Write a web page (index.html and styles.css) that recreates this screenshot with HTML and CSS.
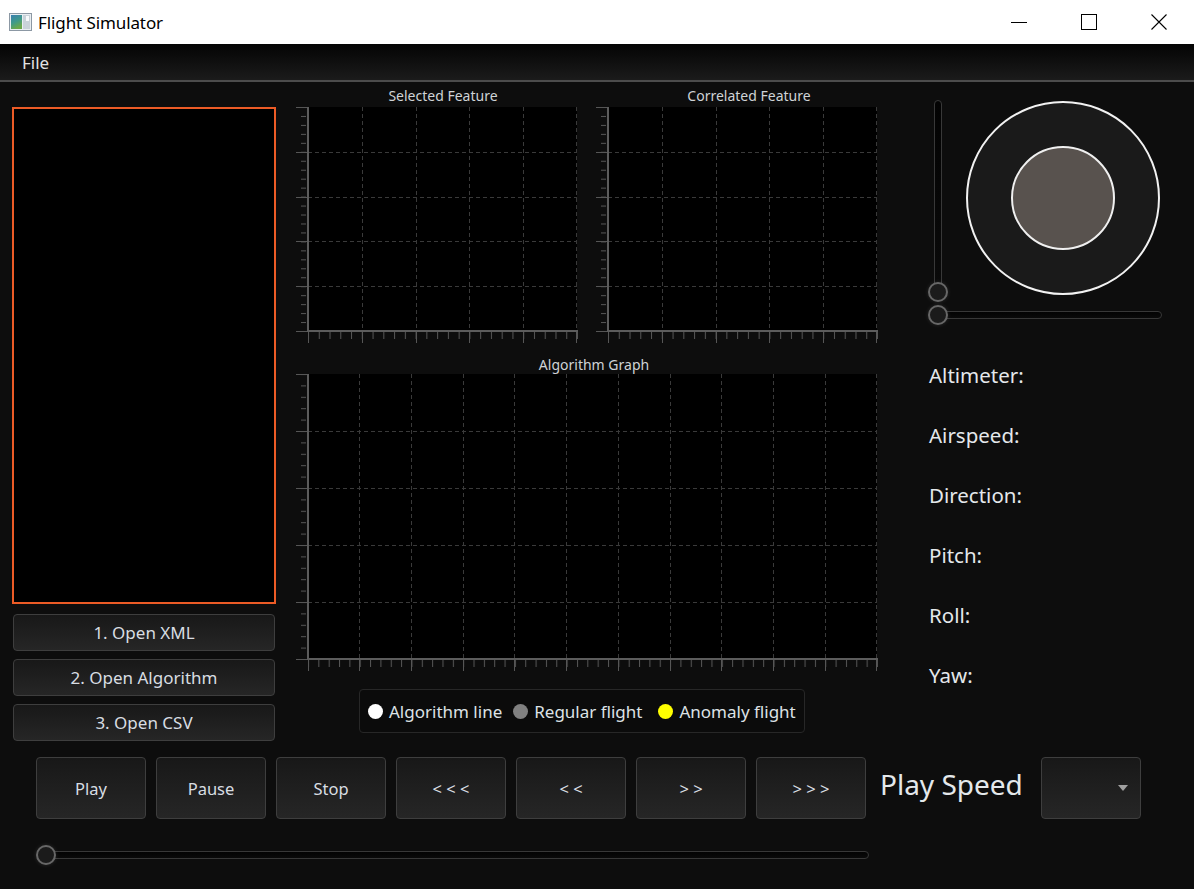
FILE: index.html
```html
<!DOCTYPE html>
<html lang="en">
<head>
<meta charset="utf-8">
<title>Flight Simulator</title>
<link rel="stylesheet" href="styles.css">
</head>
<body>
<div class="window">
  <header class="titlebar">
    <svg class="app-icon" width="23" height="18" viewBox="0 0 23 18">
      <defs>
        <linearGradient id="icoGrad" x1="0" y1="0" x2="0.4" y2="1">
          <stop offset="0" stop-color="#3a7fb0"/>
          <stop offset="0.55" stop-color="#3f9a8a"/>
          <stop offset="1" stop-color="#6aa84a"/>
        </linearGradient>
      </defs>
      <rect x="0.5" y="0.5" width="22" height="17" fill="#e9eef2" stroke="#8c98a4"/>
      <rect x="2" y="2" width="11" height="14" fill="url(#icoGrad)"/>
      <rect x="14" y="2" width="7" height="14" fill="#c9d2d9"/>
      <rect x="17" y="3" width="3" height="5" fill="#f7f9fb"/>
    </svg>
    <span class="title-text">Flight Simulator</span>
    <div class="win-controls">
      <span class="wc"><svg width="16" height="16" viewBox="0 0 16 16"><path d="M0 8.5H16" stroke="#000" stroke-width="1"/></svg></span>
      <span class="wc"><svg width="16" height="16" viewBox="0 0 16 16"><rect x="0.5" y="0.5" width="15" height="15" fill="none" stroke="#000" stroke-width="1"/></svg></span>
      <span class="wc"><svg width="16" height="16" viewBox="0 0 16 16"><path d="M0.5 0.5L15.5 15.5M15.5 0.5L0.5 15.5" stroke="#000" stroke-width="1.1"/></svg></span>
    </div>
  </header>

  <nav class="menubar"><span class="menu-item">File</span></nav>

  <main class="content">
    <div class="top">
      <section class="left-col">
        <div class="preview"></div>
        <button class="btn side-btn">1. Open XML</button>
        <button class="btn side-btn">2. Open Algorithm</button>
        <button class="btn side-btn">3. Open CSV</button>
      </section>

      <section class="center-col">
        <div class="chart-row">
          <div class="chart">
            <div class="chart-title">Selected Feature</div>
            <svg class="plot" width="286" height="240" viewBox="0 0 286 240">
              <defs>
                <pattern id="ymA" x="0" y="0" width="12" height="8.96" patternUnits="userSpaceOnUse"><rect x="7" y="0" width="5" height="1" fill="#565656"/></pattern>
                <pattern id="xmA" x="14" y="224" width="10.76" height="8" patternUnits="userSpaceOnUse"><rect x="0" y="0" width="1" height="8" fill="#565656"/></pattern>
              </defs>
              <rect x="14" y="0" width="269" height="224" fill="#000"/>
              <g stroke="#3a3a3a" stroke-width="1" stroke-dasharray="4 3" fill="none">
                <path d="M14 45.5H283M14 90.5H283M14 134.5H283M14 179.5H283"/>
                <path d="M68.5 0V224M122.5 0V224M175.5 0V224M229.5 0V224M282.5 0V224"/>
              </g>
              <rect x="2" y="0" width="12" height="224" fill="url(#ymA)"/>
              <rect x="14" y="224" width="270" height="8" fill="url(#xmA)"/>
              <g stroke="#565656" stroke-width="1" fill="none">
                <path d="M2 0.5H14M2 45.5H14M2 90.5H14M2 134.5H14M2 179.5H14M2 224.5H14"/>
                <path d="M14.5 224V236M68.5 224V236M122.5 224V236M175.5 224V236M229.5 224V236M282.5 224V236"/>
              </g>
              <rect x="13" y="0" width="2" height="225" fill="#5c5c5c"/>
              <rect x="13" y="223" width="271" height="2" fill="#5c5c5c"/>
            </svg>
          </div>
          <div class="chart">
            <div class="chart-title shifted">Correlated Feature</div>
            <svg class="plot" width="286" height="240" viewBox="0 0 286 240">
              <defs>
                <pattern id="ymB" x="0" y="0" width="12" height="8.96" patternUnits="userSpaceOnUse"><rect x="7" y="0" width="5" height="1" fill="#565656"/></pattern>
                <pattern id="xmB" x="14" y="224" width="10.76" height="8" patternUnits="userSpaceOnUse"><rect x="0" y="0" width="1" height="8" fill="#565656"/></pattern>
              </defs>
              <rect x="14" y="0" width="269" height="224" fill="#000"/>
              <g stroke="#3a3a3a" stroke-width="1" stroke-dasharray="4 3" fill="none">
                <path d="M14 45.5H283M14 90.5H283M14 134.5H283M14 179.5H283"/>
                <path d="M68.5 0V224M122.5 0V224M175.5 0V224M229.5 0V224M282.5 0V224"/>
              </g>
              <rect x="2" y="0" width="12" height="224" fill="url(#ymB)"/>
              <rect x="14" y="224" width="270" height="8" fill="url(#xmB)"/>
              <g stroke="#565656" stroke-width="1" fill="none">
                <path d="M2 0.5H14M2 45.5H14M2 90.5H14M2 134.5H14M2 179.5H14M2 224.5H14"/>
                <path d="M14.5 224V236M68.5 224V236M122.5 224V236M175.5 224V236M229.5 224V236M282.5 224V236"/>
              </g>
              <rect x="13" y="0" width="2" height="225" fill="#5c5c5c"/>
              <rect x="13" y="223" width="271" height="2" fill="#5c5c5c"/>
            </svg>
          </div>
        </div>

        <div class="chart wide">
          <div class="chart-title algo">Algorithm Graph</div>
          <svg class="plot" width="586" height="300" viewBox="0 0 586 300">
            <defs>
              <pattern id="ymC" x="0" y="0" width="12" height="11.4" patternUnits="userSpaceOnUse"><rect x="7" y="0" width="5" height="1" fill="#565656"/></pattern>
              <pattern id="xmC" x="14" y="285" width="10.345" height="8" patternUnits="userSpaceOnUse"><rect x="0" y="0" width="1" height="8" fill="#565656"/></pattern>
            </defs>
            <rect x="14" y="0" width="569" height="285" fill="#000"/>
            <g stroke="#3a3a3a" stroke-width="1" stroke-dasharray="4 3" fill="none">
              <path d="M14 57.5H583M14 114.5H583M14 171.5H583M14 228.5H583"/>
              <path d="M65.5 0V285M117.5 0V285M169.5 0V285M220.5 0V285M272.5 0V285M324.5 0V285M376.5 0V285M427.5 0V285M479.5 0V285M531.5 0V285M582.5 0V285"/>
            </g>
            <rect x="2" y="0" width="12" height="285" fill="url(#ymC)"/>
            <rect x="14" y="285" width="570" height="8" fill="url(#xmC)"/>
            <g stroke="#565656" stroke-width="1" fill="none">
              <path d="M2 0.5H14M2 57.5H14M2 114.5H14M2 171.5H14M2 228.5H14M2 285.5H14"/>
              <path d="M14.5 285V297M65.5 285V297M117.5 285V297M169.5 285V297M220.5 285V297M272.5 285V297M324.5 285V297M376.5 285V297M427.5 285V297M479.5 285V297M531.5 285V297M582.5 285V297"/>
            </g>
            <rect x="13" y="0" width="2" height="286" fill="#5c5c5c"/>
            <rect x="13" y="284" width="571" height="2" fill="#5c5c5c"/>
          </svg>
        </div>

        <div class="legend">
          <span class="dot dot-white"></span><span class="legend-text l1">Algorithm line</span>
          <span class="dot dot-gray"></span><span class="legend-text l2">Regular flight</span>
          <span class="dot dot-yellow"></span><span class="legend-text">Anomaly flight</span>
        </div>
      </section>

      <section class="right-col">
        <div class="joy-row">
          <div class="vslider">
            <div class="track vtrack"></div>
            <div class="thumb"></div>
          </div>
          <div class="joystick"><div class="joy-knob"></div></div>
        </div>
        <div class="hslider rudder">
          <div class="thumb"></div>
          <div class="track htrack"></div>
        </div>
        <ul class="readouts">
          <li>Altimeter:</li>
          <li>Airspeed:</li>
          <li>Direction:</li>
          <li>Pitch:</li>
          <li>Roll:</li>
          <li>Yaw:</li>
        </ul>
      </section>
    </div>

    <div class="controls">
      <div class="ctrl-group">
        <button class="btn ctrl-btn">Play</button>
        <button class="btn ctrl-btn">Pause</button>
        <button class="btn ctrl-btn">Stop</button>
        <button class="btn ctrl-btn">&lt; &lt; &lt;</button>
        <button class="btn ctrl-btn">&lt; &lt;</button>
        <button class="btn ctrl-btn">&gt; &gt;</button>
        <button class="btn ctrl-btn">&gt; &gt; &gt;</button>
      </div>
      <span class="speed-label">Play Speed</span>
      <div class="combo"><span class="caret"></span></div>
    </div>

    <div class="hslider timeline">
      <div class="thumb"></div>
      <div class="track htrack"></div>
    </div>
  </main>
</div>
</body>
</html>
```

FILE: styles.css
```css
* { box-sizing: border-box; }

html, body {
  margin: 0;
  padding: 0;
  width: 1194px;
  height: 889px;
  overflow: hidden;
  background: #0d0d0d;
  font-family: "Noto Sans", "Open Sans", sans-serif;
}

.window {
  width: 1194px;
  height: 889px;
  display: flex;
  flex-direction: column;
}

/* ---------- title bar ---------- */
.titlebar {
  height: 44px;
  background: #ffffff;
  display: flex;
  align-items: center;
  flex-shrink: 0;
}
.app-icon {
  margin-left: 9px;
}
.title-text {
  margin-left: 6px;
  font-size: 17px;
  color: #000;
  letter-spacing: -0.1px;
}
.win-controls {
  margin-left: auto;
  display: flex;
  height: 44px;
}
.wc {
  width: 70px;
  height: 44px;
  display: flex;
  align-items: center;
  justify-content: center;
}

/* ---------- menu bar ---------- */
.menubar {
  height: 38px;
  flex-shrink: 0;
  background: linear-gradient(#040404, #1b1b1b);
  border-bottom: 2px solid #4c4c4c;
  display: flex;
  align-items: center;
  padding-left: 22px;
}
.menu-item {
  color: #e2e2e2;
  font-size: 17px;
  margin-top: 1px;
}

/* ---------- content ---------- */
.content {
  flex: 1;
  display: flex;
  flex-direction: column;
}
.top {
  display: flex;
  align-items: flex-start;
}

.btn {
  font-family: "Noto Sans", "Open Sans", sans-serif;
  color: #d8dde2;
  background: linear-gradient(#181818, #262626);
  border: 1px solid #3e3e3e;
  border-radius: 4px;
  padding: 0;
  cursor: default;
}

/* left column */
.left-col {
  margin-left: 12px;
  padding-top: 25px;
  width: 264px;
  display: flex;
  flex-direction: column;
}
.preview {
  height: 497px;
  background: #000;
  border: 2px solid #ec5b26;
}
.side-btn {
  margin-left: 1px;
  width: 262px;
  height: 37px;
  margin-top: 8px;
  font-size: 17px;
}
.side-btn:first-of-type { margin-top: 10px; }

/* center column */
.center-col {
  margin-left: 18px;
  width: 586px;
  padding-top: 5px;
  display: flex;
  flex-direction: column;
}
.chart-row {
  display: flex;
  gap: 14px;
}
.chart {
  display: flex;
  flex-direction: column;
}
.chart-title {
  height: 20px;
  line-height: 18px;
  padding-left: 12px;
  text-align: center;
  font-size: 14px;
  color: #cfd3d6;
}
.chart-title.shifted { padding-left: 24px; }
.chart-title.algo {
  margin-top: 9px;
  height: 18px;
  padding-left: 14px;
}
.plot { display: block; }

.legend {
  margin-top: 15px;
  margin-left: 65px;
  align-self: flex-start;
  height: 44px;
  display: flex;
  align-items: center;
  padding: 0 8px 0 8px;
  border: 1px solid #272727;
  border-radius: 4px;
  background: #0b0b0b;
}
.dot {
  width: 15px;
  height: 15px;
  border-radius: 50%;
  flex-shrink: 0;
}
.dot-white { background: #ffffff; }
.dot-gray { background: #808080; }
.dot-yellow { background: #ffff00; }
.legend-text {
  margin-left: 6px;
  font-size: 17px;
  color: #dde2e6;
}
.legend-text.l1 { margin-right: 11px; }
.legend-text.l2 { margin-right: 16px; }

/* right column */
.right-col {
  margin-left: 48px;
  padding-top: 17px;
  display: flex;
  flex-direction: column;
}
.joy-row {
  display: flex;
  align-items: flex-start;
}
.vslider {
  width: 20px;
  height: 203px;
  display: flex;
  flex-direction: column;
  align-items: center;
}
.track {
  background: linear-gradient(#030303, #0a0a0a);
  border: 1px solid #383838;
  border-radius: 4px;
}
.vtrack {
  width: 8px;
  flex: 1;
  margin-top: 1px;
  margin-bottom: -10px;
}
.thumb {
  width: 20px;
  height: 20px;
  border-radius: 50%;
  background: #1b1b1b;
  border: 2px solid #676767;
  box-shadow: 0 0 4px rgba(255, 255, 255, 0.12);
  z-index: 1;
  flex-shrink: 0;
}
.joystick {
  margin-left: 18px;
  margin-top: 2px;
  width: 194px;
  height: 194px;
  border-radius: 50%;
  border: 2px solid #f2f2f2;
  background: #1a1a1a;
  display: flex;
  align-items: center;
  justify-content: center;
}
.joy-knob {
  width: 104px;
  height: 104px;
  border-radius: 50%;
  border: 2px solid #f0f0f0;
  background: #58524e;
}
.hslider {
  height: 20px;
  display: flex;
  align-items: center;
}
.htrack {
  flex: 1;
  height: 8px;
  margin-left: -18px;
}
.rudder {
  margin-top: 3px;
  width: 234px;
}
.readouts {
  list-style: none;
  margin: 20px 0 0 1px;
  padding: 0;
}
.readouts li {
  height: 60px;
  line-height: 60px;
  font-size: 20.5px;
  color: #e4e8eb;
}

/* controls */
.controls {
  margin-top: 16px;
  padding-left: 36px;
  display: flex;
  align-items: center;
}
.ctrl-group {
  display: flex;
  gap: 10px;
}
.ctrl-btn {
  width: 110px;
  height: 62px;
  font-size: 16.5px;
}
.speed-label {
  margin-left: 14px;
  width: 161px;
  font-size: 28px;
  color: #e4e8eb;
  margin-top: -9px;
}
.combo {
  width: 100px;
  height: 62px;
  border: 1px solid #3e3e3e;
  border-radius: 4px;
  background: linear-gradient(#181818, #262626);
  display: flex;
  align-items: center;
  justify-content: flex-end;
  padding-right: 12px;
}
.caret {
  width: 0;
  height: 0;
  border-left: 5px solid transparent;
  border-right: 5px solid transparent;
  border-top: 6px solid #a0a0a0;
}
.timeline {
  margin-top: 26px;
  margin-left: 36px;
  width: 833px;
}
```
